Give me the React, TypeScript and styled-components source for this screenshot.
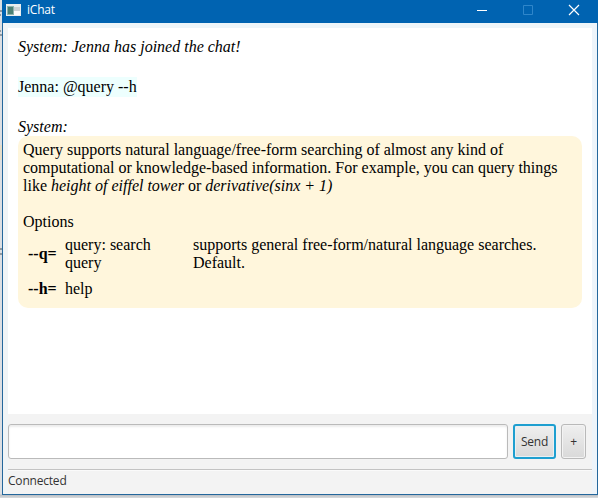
import React from "react";
import styled, { createGlobalStyle } from "styled-components";

const GlobalStyle = createGlobalStyle`
  * { box-sizing: border-box; }
  body { margin: 0; background: #dfe2e5; overflow: hidden; }
`;

const Desktop = styled.div`
  display: flex;
  width: 598px;
  height: 498px;
  background: linear-gradient(#dcdfe3 0 494px, #b9bec3 495px, #dadcde 498px);
`;

/* Strip of whatever sits behind the window on its left edge */
const Behind = styled.svg`
  flex: none;
  width: 2px;
  height: 498px;
`;

const Window = styled.div`
  display: flex;
  flex-direction: column;
  width: 596px;
  height: 495px;
  border: 1px solid #24679c;
  border-top: 0;
  background: #f3f3f3;
`;

const TitleBar = styled.header`
  display: flex;
  align-items: center;
  flex: none;
  height: 23px;
  margin: 0 -1px;
  padding: 0 18px 3px 4px;
  background: #0063b1;
  color: #fff;
`;

const Title = styled.div`
  flex: 1;
  margin-left: 6px;
  font: 12px/18px "Open Sans", sans-serif;
  letter-spacing: -0.2px;
`;

const Controls = styled.div`
  display: flex;
  gap: 34px;
`;

const Glyph = styled.svg`
  display: block;
  width: 12px;
  height: 12px;
  fill: none;
`;

const Body = styled.main`
  display: flex;
  flex-direction: column;
  flex: 1;
  padding: 5px 5px 0 5px;
  box-shadow: inset 5px 0 0 #f0f4f6, inset -5px 0 0 #edf4fa, inset 0 5px 0 #edf5f9;
`;

const Transcript = styled.section`
  flex: none;
  height: 386px;
  padding: 10px;
  background: #fff;
  color: #000;
  font: 16px/18px "Liberation Serif", serif;
`;

const Message = styled.div<{ $height: number }>`
  height: ${(p) => p.$height}px;
  line-height: 18px;
  white-space: nowrap;
`;

const Mention = styled.span`
  display: inline-block;
  height: 20px;
  line-height: 20px;
  background: #edfffe;
`;

const HelpCard = styled.article`
  height: 172px;
  padding: 5px;
  border-radius: 10px;
  background: #fff6dc;
  white-space: nowrap;
`;

const Line = styled.div`
  height: 18px;
`;

const Options = styled.div`
  display: grid;
  grid-template-columns: 37px 128px auto;
  row-gap: 8px;
  align-items: center;
  padding: 5px 0 0 5px;
`;

const Composer = styled.div`
  display: flex;
  flex: none;
  gap: 5px;
  height: 35px;
  margin-top: 10px;
`;

const MessageInput = styled.input`
  width: 500px;
  height: 35px;
  padding: 0 8px;
  border: 1px solid #bababa;
  border-radius: 3px;
  outline: 0;
  background: #fff;
  box-shadow: inset 0 2px 2px #ededed;
  font: 12px "Open Sans", sans-serif;
`;

const Button = styled.button<{ $width: number; $focused?: boolean }>`
  width: ${(p) => p.$width}px;
  height: 35px;
  padding: 0;
  border: ${(p) => (p.$focused ? "2px solid #1e9fd0" : "1px solid #b9b9b9")};
  border-radius: 3px;
  background: linear-gradient(#efefef, #d9d9d9);
  box-shadow: inset 0 0 0 1px ${(p) => (p.$focused ? "#e8f0f3" : "#f3f3f3")};
  color: #333;
  font: 12px "Open Sans", sans-serif;
  letter-spacing: -0.2px;
`;

const Status = styled.footer`
  flex: none;
  height: 24px;
  margin-top: 10px;
  border-top: 1px solid #c3c3c3;
  box-shadow: inset 0 1px 0 #fafafa;
  color: #333;
  font: 12px/22px "Open Sans", sans-serif;
  letter-spacing: -0.2px;
`;

export default function App() {
  return (
    <Desktop>
      <GlobalStyle />
      <Behind viewBox="0 0 2 498">
        <path d="M0 11h2M0 15h1M0 31h1M0 35h2M0 249h2M0 254h2" stroke="#46525c" />
        <path d="M0 145h2v15H0z" fill="#e6ddc9" />
      </Behind>
      <Window>
        <TitleBar>
          <svg width="15" height="12" viewBox="0 0 15 12">
            <path d="M0 0h15v12H0z" fill="#e9edef" />
            <path d="M1 2h7v9H1z" fill="#8fb3ae" />
            <path d="M2 3h5v7H2z" fill="#4b8075" />
            <path d="M8 3h6v4H8z" fill="#cbd1d4" />
            <path d="M8 7h6v4H8z" fill="#fafafa" />
          </svg>
          <Title>iChat</Title>
          <Controls>
            <Glyph viewBox="0 0 12 12"><path d="M1 6.5h10" stroke="#fff" /></Glyph>
            <Glyph viewBox="0 0 12 12"><path d="M1.5 1.5h9v9h-9z" stroke="#2f86ca" /></Glyph>
            <Glyph viewBox="0 0 12 12"><path d="M1 1l10 10M11 1L1 11" stroke="#fff" strokeWidth="1.2" /></Glyph>
          </Controls>
        </TitleBar>
        <Body>
          <Transcript>
            <Message $height={39}><em>System: Jenna has joined the chat!</em></Message>
            <Message $height={41}><Mention>Jenna: @query --h</Mention></Message>
            <Message $height={18}><em>System:</em></Message>
            <HelpCard>
              <Line>Query supports natural language/free-form searching of almost any kind of</Line>
              <Line>computational or knowledge-based information. For example, you can query things</Line>
              <Line>like <em>height of eiffel tower</em> or <em>derivative(sinx + 1)</em></Line>
              <Line />
              <Line>Options</Line>
              <Options>
                <b>--q=</b>
                <div>query: search<br />query</div>
                <div>supports general free-form/natural language searches.<br />Default.</div>
                <b>--h=</b>
                <div>help</div>
              </Options>
            </HelpCard>
          </Transcript>
          <Composer>
            <MessageInput aria-label="Message" />
            <Button $width={43} $focused>Send</Button>
            <Button $width={25}>+</Button>
          </Composer>
          <Status>Connected</Status>
        </Body>
      </Window>
    </Desktop>
  );
}
